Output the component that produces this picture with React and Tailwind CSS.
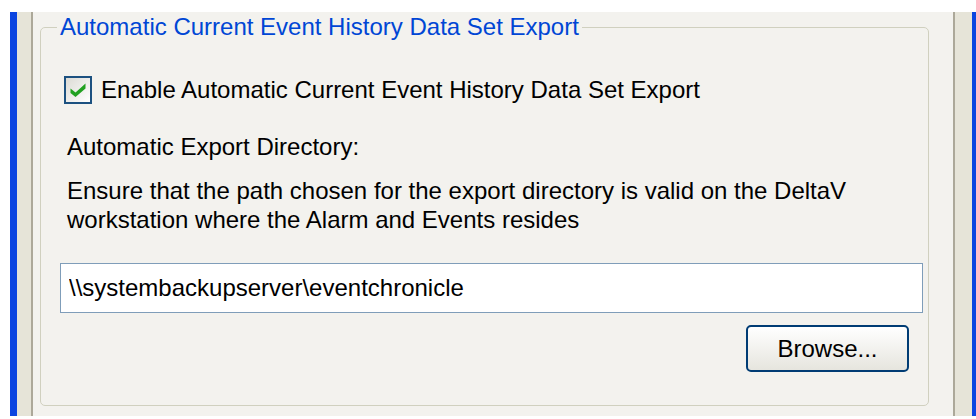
import { useState } from 'react';

function XpCheckbox({ checked, onChange }) {
  return (
    <button
      type="button"
      onClick={() => onChange(!checked)}
      className="w-[28px] h-[28px] shrink-0 border-2 border-[#1C5180] bg-gradient-to-br from-[#DCDBD5] to-white flex items-center justify-center"
    >
      {checked && (
        <svg width="18" height="16" viewBox="0 0 18 16">
          <path d="M1.5 6.5 L6.5 10.5 L16.5 1.5 L16.5 6.5 L6.5 15 L1.5 11 Z" fill="#21A121" />
        </svg>
      )}
    </button>
  );
}

export default function App() {
  const [enabled, setEnabled] = useState(true);
  const [dir, setDir] = useState('\\\\systembackupserver\\eventchronicle');

  return (
    <div className="w-[976px] h-[419px] bg-white pt-[12px] pl-[10px] overflow-hidden font-['Liberation_Sans',Arial,sans-serif] text-[24px] text-black">
      <div className="flex h-[404px]">
        <div className="w-[7px] bg-[#0B45E0]" />
        <div className="w-[14px] bg-[#E6E4D8]" />
        <div className="w-[2px] bg-[#ACA899]" />

        <div className="flex-1 bg-[#F3F2EE] pl-[7px] pr-[24px] pt-[4px]">
          <fieldset className="border border-[#D0D0BF] rounded-[5px] pl-[19px] pr-[5px] pb-[33px]">
            <legend className="-ml-[3px] px-[3px] leading-[22px] text-[#0046D5]">
              Automatic Current Event History Data Set Export
            </legend>

            <label className="flex items-center gap-[9px] ml-[4px] mt-[38px] leading-[28px]">
              <XpCheckbox checked={enabled} onChange={setEnabled} />
              <span>Enable Automatic Current Event History Data Set Export</span>
            </label>

            <div className="ml-[7px] mt-[28px] leading-[29px]">Automatic Export Directory:</div>

            <p className="ml-[7px] mt-[15px] leading-[29px]">
              Ensure that the path chosen for the export directory is valid on the DeltaV
              <br />
              workstation where the Alarm and Events resides
            </p>

            <input
              value={dir}
              onChange={(e) => setDir(e.target.value)}
              className="block w-full h-[50px] mt-[29px] border border-[#7F9DB9] bg-white px-[8px] outline-none"
            />

            <div className="flex justify-end mt-[12px] mr-[14px]">
              <button
                type="button"
                className="w-[163px] h-[47px] border-2 border-[#003C74] rounded-[5px] bg-gradient-to-b from-white to-[#E6E5DE]"
              >
                Browse...
              </button>
            </div>
          </fieldset>
        </div>

        <div className="w-[2px] bg-[#ACA899]" />
        <div className="w-[17px] bg-[#E6E4D8]" />
        <div className="w-[4px] bg-[#0B45E0]" />
      </div>
    </div>
  );
}
